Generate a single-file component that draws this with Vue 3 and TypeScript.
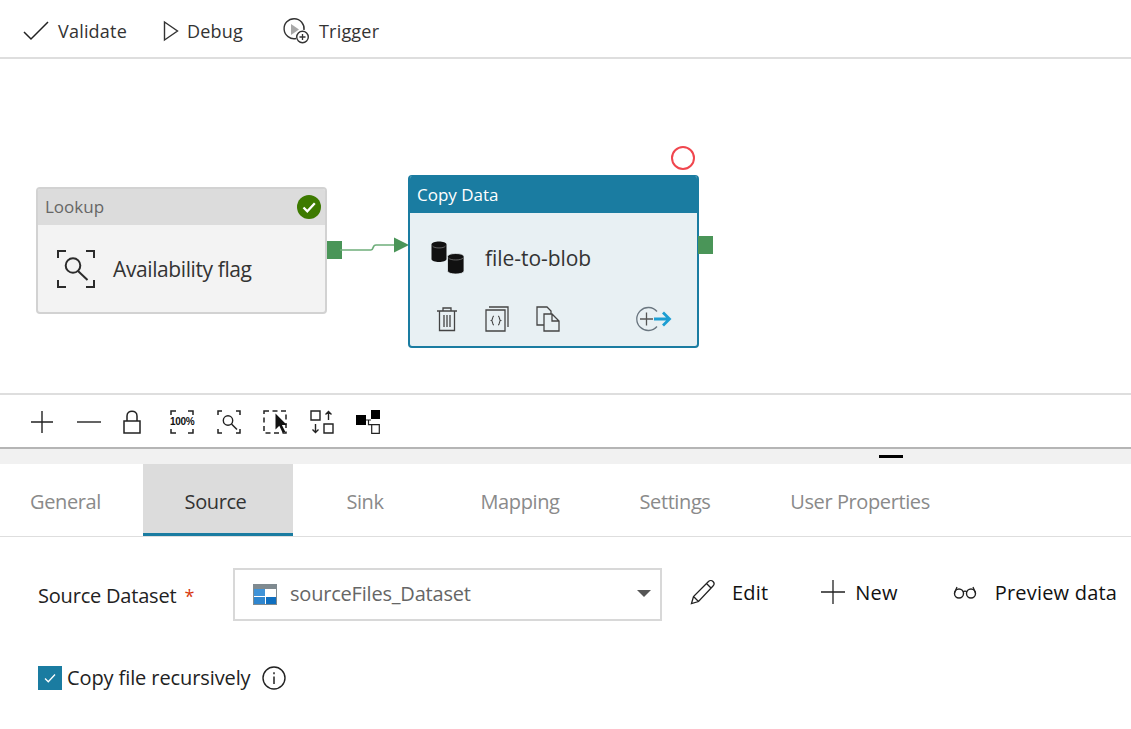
<template>
  <div class="page">
    <div class="toolbar">
      <div class="tool tool--validate">
        <svg width="26" height="20" viewBox="0 0 26 20" class="icon"><path d="M1 11l7 7L25 1" fill="none" stroke="#222" stroke-width="1.5" /></svg>
        <span>Validate</span>
      </div>
      <div class="tool tool--debug">
        <svg width="16" height="22" viewBox="0 0 16 22" class="icon"><path d="M1.5 2v18L14.5 11z" fill="none" stroke="#333" stroke-width="1.4" /></svg>
        <span>Debug</span>
      </div>
      <div class="tool">
        <svg width="28" height="28" viewBox="0 0 28 28" class="icon">
          <path d="M14 21.5A10 10 0 1 1 22 13" fill="none" stroke="#333" stroke-width="1.4" />
          <path d="M9 7v11l8-5.500z" fill="#a8a8a8" />
          <circle cx="20.500" cy="20" r="5.800" fill="#fff" stroke="#333" stroke-width="1.4" />
          <path d="M17.500 20h6M20.500 17v6" stroke="#333" stroke-width="1.3" />
        </svg>
        <span>Trigger</span>
      </div>
    </div>

    <div class="canvas">
      <div class="node node--lookup">
        <div class="node__head">
          Lookup
          <svg class="node__ok" width="24" height="24" viewBox="0 0 24 24">
            <circle cx="12" cy="12" r="12" fill="#3d7a00" />
            <path d="M6.500 12.500l3.800 3.800 7.500-8" fill="none" stroke="#fff" stroke-width="2.300" />
          </svg>
        </div>
        <div class="node__body">
          <svg width="38" height="38" viewBox="0 0 38 38">
            <path d="M1 8V1h8M29 1h8v7M37 30v7h-8M9 37H1v-7" fill="none" stroke="#2b2b2b" stroke-width="2" />
            <circle cx="16" cy="15.500" r="7.300" fill="none" stroke="#2b2b2b" stroke-width="2" />
            <path d="M21 21l9.500 9" stroke="#2b2b2b" stroke-width="2" />
          </svg>
          <span class="node__name">Availability flag</span>
        </div>
      </div>

      <div class="handle handle--lookup"></div>
      <svg class="link" width="70" height="24" viewBox="0 0 70 24">
        <path d="M0 16h31c3 0 1-5 5-5h30" fill="none" stroke="#6fae7b" stroke-width="1.700" />
        <path d="M54 3.500L69 11 54 18.500z" fill="#4a9558" />
      </svg>

      <div class="node node--copy">
        <div class="node__head">Copy Data</div>
        <div class="node__body">
          <svg width="34" height="34" viewBox="0 0 34 34">
            <path d="M0.500 3.500C0.500 -0.500 15.500 -0.500 15.500 3.500V18C15.500 22 0.500 22 0.500 18z" fill="#111" />
            <path d="M1.500 5c1.500 2.600 11.500 2.600 13 0" fill="none" stroke="#777" stroke-width="0.800" />
            <path d="M16.500 15.500C16.500 11.500 33 11.500 33 15.500V30C33 34 16.500 34 16.500 30z" fill="#111" stroke="#e8f0f3" stroke-width="0.800" />
            <path d="M17.500 17c1.500 2.600 13 2.600 14.500 0" fill="none" stroke="#777" stroke-width="0.800" />
          </svg>
          <span class="node__name node__name--copy">file-to-blob</span>
        </div>
        <div class="node__actions">
          <svg width="22" height="26" viewBox="0 0 22 26">
            <path d="M1 5h20M7 5V2h8v3M3.500 5v19.500h15V5M8 9v12M11 9v12M14 9v12" fill="none" stroke="#444" stroke-width="1.300" />
          </svg>
          <svg width="24" height="26" viewBox="0 0 24 26">
            <path d="M4 1h19v20M1 4h19v21H1z" fill="none" stroke="#444" stroke-width="1.300" />
            <path d="M9 10c-2 0-1 4-2.500 4.500C8 15 7 19 9 19M13 10c2 0 1 4 2.500 4.500C14 15 15 19 13 19" fill="none" stroke="#444" stroke-width="1.100" />
          </svg>
          <svg width="24" height="26" viewBox="0 0 24 26">
            <path d="M8 19H1V1h10l4 4v3M8 8h8l7 7v10H8zM16 8v7h7" fill="none" stroke="#444" stroke-width="1.300" />
          </svg>
          <svg class="node__next" width="40" height="26" viewBox="0 0 40 26">
            <path d="M24 5.500A11.500 11.500 0 1 0 24 20.500" fill="none" stroke="#6b7780" stroke-width="1.300" />
            <path d="M7 13h13M13.500 6.500v13" stroke="#555" stroke-width="1.300" />
            <path d="M21 13h15M30 6.500l6.500 6.500-6.500 6.500" fill="none" stroke="#1c9ed2" stroke-width="2.800" />
          </svg>
        </div>
      </div>
      <div class="handle handle--copy"></div>
      <div class="badge"></div>
    </div>

    <div class="zoombar">
      <svg width="24" height="24" viewBox="0 0 24 24"><path d="M1 12h22M12 1v22" stroke="#222" stroke-width="1.400" /></svg>
      <svg width="24" height="24" viewBox="0 0 24 24"><path d="M0 12h24" stroke="#222" stroke-width="1.400" /></svg>
      <svg class="lock" width="18" height="24" viewBox="0 0 18 24"><path d="M1 11h16v12H1zM4 11V6c0-6.500 10-6.500 10 0v5" fill="none" stroke="#222" stroke-width="1.500" /></svg>
      <div class="frame">
        <svg width="24" height="24" viewBox="0 0 24 24"><path d="M1 5V1h5M18 1h5v4M23 19v4h-5M6 23H1v-4" fill="none" stroke="#222" stroke-width="1.500" /></svg>
        <span class="frame__text">100%</span>
      </div>
      <svg width="24" height="24" viewBox="0 0 24 24">
        <path d="M1 5V1h4M19 1h4v4M23 19v4h-4M5 23H1v-4" fill="none" stroke="#222" stroke-width="1.500" />
        <circle cx="11" cy="10.500" r="4.700" fill="none" stroke="#222" stroke-width="1.400" />
        <path d="M14.500 14l5.500 5.500" stroke="#222" stroke-width="1.500" />
      </svg>
      <svg width="24" height="24" viewBox="0 0 24 24">
        <rect x="1" y="1" width="22" height="22" fill="none" stroke="#222" stroke-width="1.500" stroke-dasharray="5 3.500" />
        <path d="M12.500 3.500v16l3.800-3.800 3.400 7.300 2.600-1.200-3.400-6.800h5z" fill="#111" />
      </svg>
      <svg width="24" height="24" viewBox="0 0 24 24">
        <path d="M1 1h9v9H1zM14 14h9v9h-9zM18.500 10V1.500M15.500 4.500l3-3 3 3M5.500 14v8.500M2.500 19.500l3 3 3-3" fill="none" stroke="#222" stroke-width="1.400" />
      </svg>
      <svg width="24" height="24" viewBox="0 0 24 24">
        <path d="M0 5h10v10H0zM15 0h9v9H15z" fill="#000" />
        <path d="M15.700 14.700h7.600v8.600h-7.600zM10 10h5M12.500 10v4.700h3" fill="none" stroke="#222" stroke-width="1.200" />
      </svg>
    </div>

    <div class="dragbar"><span class="dragbar__grip"></span></div>

    <div class="tabs">
      <div
        v-for="tab in tabs"
        :key="tab.label"
        class="tabs__item"
        :class="{ 'tabs__item--active': tab.label === activeTab }"
        :style="{ width: `${tab.width}px` }"
      >
        {{ tab.label }}
      </div>
    </div>

    <div class="form">
      <div class="form__row">
        <div class="form__label">Source Dataset <span class="form__req">*</span></div>
        <div class="select">
          <svg width="24" height="21" viewBox="0 0 24 21">
            <path d="M0 0h24v21H0z" fill="#7f8a90" />
            <path d="M1 5h22v15H1z" fill="#fff" />
            <path d="M1 5h11v7H1z" fill="#3f93d8" />
            <path d="M1 13h11v7H1z" fill="#2f86cf" />
            <path d="M13 13h10v7H13z" fill="#0f6fc0" />
          </svg>
          <span class="select__value">sourceFiles_Dataset</span>
          <span class="select__caret"></span>
        </div>
        <div class="action action--edit">
          <svg width="26" height="26" viewBox="0 0 26 26">
            <path d="M1.500 24.500l2-7L18.500 2.500c1.500-1.500 3.500-1 4.500 0s1.500 3 0 4.500L8.500 22.500zM3.500 17.500l5 5M16.500 4.500l5 5" fill="none" stroke="#222" stroke-width="1.300" />
          </svg>
          <span>Edit</span>
        </div>
        <div class="action action--new">
          <svg width="24" height="24" viewBox="0 0 24 24"><path d="M0 12h24M12 0v24" stroke="#222" stroke-width="1.300" /></svg>
          <span>New</span>
        </div>
        <div class="action">
          <svg width="24" height="14" viewBox="0 0 24 14">
            <circle cx="6" cy="8.500" r="4.500" fill="none" stroke="#222" stroke-width="1.400" />
            <circle cx="18" cy="8.500" r="4.500" fill="none" stroke="#222" stroke-width="1.400" />
            <path d="M10 7c1-1 3-1 4 0M1.500 8L4 2M22.500 8L20 2" fill="none" stroke="#222" stroke-width="1.300" />
          </svg>
          <span>Preview data</span>
        </div>
      </div>
      <div class="check">
        <span class="check__box">
          <svg width="14" height="12" viewBox="0 0 14 12"><path d="M2 6.500l3.300 3.300L12 2.500" fill="none" stroke="#fff" stroke-width="1.300" /></svg>
        </span>
        <span class="check__label">Copy file recursively</span>
        <svg width="24" height="24" viewBox="0 0 24 24">
          <circle cx="12" cy="12" r="11" fill="none" stroke="#222" stroke-width="1.400" />
          <path d="M12 10.500v7.500M12 6.300v2" stroke="#222" stroke-width="1.500" />
        </svg>
      </div>
    </div>
  </div>
</template>

<script setup lang="ts">
interface Tab {
  label: string;
  width: number;
}

const activeTab = 'Source';

const tabs: Tab[] = [
  { label: 'General', width: 143 },
  { label: 'Source', width: 150 },
  { label: 'Sink', width: 144 },
  { label: 'Mapping', width: 166 },
  { label: 'Settings', width: 144 },
  { label: 'User Properties', width: 226 },
];
</script>

<style>
html,
body {
  margin: 0;
  background: #fff;
}
</style>

<style scoped>
.page {
  width: 1131px;
  height: 729px;
  overflow: hidden;
  font-family: 'Open Sans', 'Noto Sans', sans-serif;
  color: #222;
  background: #fff;
}

.toolbar {
  display: flex;
  align-items: center;
  height: 59px;
  padding: 4px 0 0 23px;
  box-sizing: border-box;
  border-bottom: 2px solid #dedede;
  font-size: 18px;
  letter-spacing: 0.2px;
  color: #333;
}

.tool {
  display: flex;
  align-items: center;
  gap: 9px;
}

.tool--validate {
  margin-right: 36px;
}

.tool--debug {
  gap: 8px;
  margin-right: 39px;
}

.icon {
  display: block;
}

.canvas {
  position: relative;
  height: 334px;
  border-bottom: 2px solid #dedede;
}

.node {
  position: absolute;
  box-sizing: border-box;
  border-radius: 4px;
  overflow: hidden;
}

.node--lookup {
  left: 36px;
  top: 128px;
  width: 291px;
  height: 127px;
  border: 2px solid #d2d2d2;
  background: #f3f3f3;
}

.node--copy {
  left: 408px;
  top: 116px;
  width: 291px;
  height: 173px;
  border: 2px solid #1a7ca1;
  border-top-width: 1px;
  background: #e8f0f3;
}

.node__head {
  display: flex;
  align-items: center;
  height: 36px;
  padding: 0 0 1px 7px;
  box-sizing: border-box;
  font-size: 17px;
  background: #dcdcdc;
  color: #666;
}

.node--copy .node__head {
  height: 37px;
  background: #1a7ca1;
  color: #fff;
}

.node__ok {
  margin-left: auto;
  margin-right: 4px;
}

.node__body {
  display: flex;
  align-items: center;
  padding: 25px 0 0 19px;
}

.node--copy .node__body {
  padding: 28px 0 0 21px;
}

.node__name {
  margin-left: 18px;
  font-size: 21px;
  letter-spacing: -0.4px;
  color: #333;
}

.node__name--copy {
  margin-left: 20px;
  letter-spacing: -0.05px;
}

.node__actions {
  display: flex;
  align-items: center;
  gap: 27px;
  padding: 31px 24px 0 26px;
}

.node__next {
  margin-left: auto;
}

.handle {
  position: absolute;
  width: 15px;
  height: 18px;
  background: #4a9558;
}

.handle--lookup {
  left: 327px;
  top: 182px;
}

.handle--copy {
  left: 698px;
  top: 177px;
}

.link {
  position: absolute;
  left: 340px;
  top: 175px;
}

.badge {
  position: absolute;
  left: 671px;
  top: 87px;
  width: 24px;
  height: 24px;
  box-sizing: border-box;
  border: 2px solid #f0464e;
  border-radius: 50%;
}

.zoombar {
  display: flex;
  align-items: center;
  gap: 22.5px;
  height: 54px;
  padding: 2px 0 0 30px;
  box-sizing: border-box;
  border-bottom: 2px solid #b5b5b5;
}

.lock {
  margin-right: 6.5px;
}

.frame {
  position: relative;
  width: 24px;
  height: 24px;
}

.frame__text {
  position: absolute;
  left: 0;
  right: 0;
  top: 6px;
  text-align: center;
  font-size: 10px;
  line-height: 12px;
  letter-spacing: -0.3px;
  font-weight: 700;
  font-family: 'Liberation Sans', sans-serif;
  color: #111;
}

.dragbar {
  position: relative;
  height: 15px;
  background: #f1f1f1;
}

.dragbar__grip {
  position: absolute;
  left: 879px;
  top: 6px;
  width: 24px;
  height: 3px;
  background: #000;
}

.tabs {
  display: flex;
  height: 73px;
  box-sizing: border-box;
  border-bottom: 1px solid #dedede;
}

.tabs__item {
  display: flex;
  align-items: center;
  justify-content: center;
  box-sizing: border-box;
  height: 72px;
  padding-top: 3px;
  font-size: 20px;
  letter-spacing: -0.4px;
  color: #8a8a8a;
}

.tabs__item:first-child {
  padding-right: 12px;
}

.tabs__item--active {
  padding: 6px 5px 0 0;
  border-bottom: 3px solid #1a7ca1;
  background: #dcdcdc;
  color: #333;
}

.form {
  padding: 31px 0 0 38px;
}

.form__row {
  display: flex;
  align-items: center;
}

.form__label {
  width: 195px;
  padding-top: 1px;
  font-size: 20px;
  letter-spacing: -0.2px;
}

.form__req {
  margin-left: 3px;
  font-size: 18px;
  color: #d8390f;
}

.select {
  display: flex;
  align-items: center;
  width: 429px;
  height: 53px;
  padding: 0 15px 0 18px;
  box-sizing: border-box;
  border: 2px solid #d8d8d8;
}

.select__value {
  margin: 0 0 3px 13px;
  font-size: 20px;
  letter-spacing: -0.2px;
  color: #666;
}

.select__caret {
  margin: 0 -6px 3px auto;
  border-top: 7px solid #555;
  border-left: 7px solid transparent;
  border-right: 7px solid transparent;
}

.action {
  display: flex;
  align-items: center;
  gap: 18px;
  margin-bottom: 5px;
  font-size: 20px;
  letter-spacing: 0.2px;
  font-weight: 500;
  color: #111;
}

.action--edit {
  margin-left: 28px;
  gap: 16px;
}

.action--new {
  margin: 0 55px 5px 53px;
  gap: 10px;
}

.check {
  display: flex;
  align-items: center;
  margin-top: 43px;
}

.check__box {
  display: flex;
  align-items: center;
  justify-content: center;
  width: 24px;
  height: 24px;
  background: #1a7ca1;
}

.check__label {
  margin: 0 11px 0 5px;
  font-size: 20px;
  letter-spacing: -0.1px;
}
</style>
